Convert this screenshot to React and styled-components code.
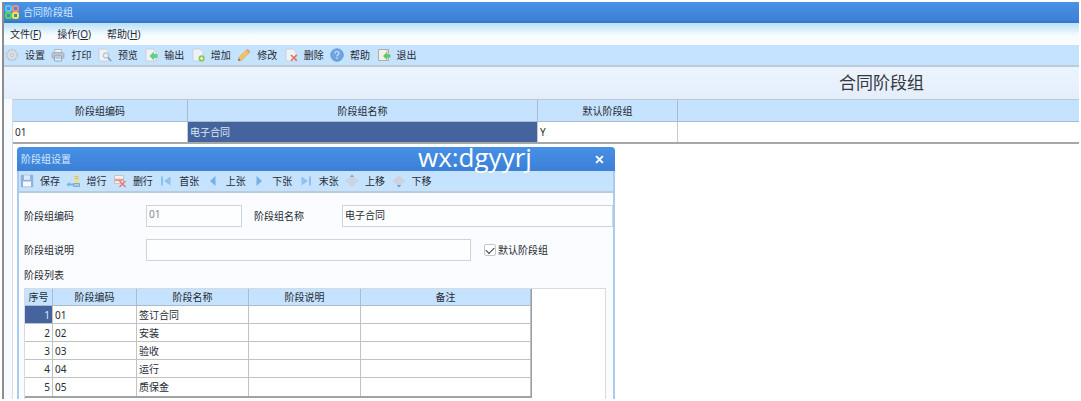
import React from 'react';
import styled, { createGlobalStyle, css } from 'styled-components';

const tools = [
    { icon: 'gear', label: '设置' },
    { icon: 'printer', label: '打印' },
    { icon: 'preview', label: '预览' },
    { icon: 'export', label: '输出' },
    { icon: 'add', label: '增加' },
    { icon: 'pencil', label: '修改' },
    { icon: 'remove', label: '删除' },
    { icon: 'help', label: '帮助' },
    { icon: 'exit', label: '退出' },
];

const dialogTools = [
    { icon: 'save', label: '保存' },
    { icon: 'addRow', label: '增行' },
    { icon: 'deleteRow', label: '删行' },
    { icon: 'first', label: '首张' },
    { icon: 'previous', label: '上张' },
    { icon: 'next', label: '下张' },
    { icon: 'last', label: '末张' },
    { icon: 'moveUp', label: '上移' },
    { icon: 'moveDown', label: '下移' },
];

const stages = [
    { code: '01', name: '签订合同' },
    { code: '02', name: '安装' },
    { code: '03', name: '验收' },
    { code: '04', name: '运行' },
    { code: '05', name: '质保金' },
];

const page = <path d="M2 1h7l3 3v9H2z" fill="#eef1f5" stroke="#c3c9d2" strokeWidth=".7" />;

const icons = {
    gear: (
        <>
            <circle cx="7" cy="7" r="5.4" fill="#dce3ec" stroke="#bcc4cf" strokeWidth="1.6" strokeDasharray="2.4 1" />
            <circle cx="7" cy="7" r="4.3" fill="#dde3ea" stroke="#c8ced7" strokeWidth=".8" />
            <circle cx="7" cy="7" r="1.8" fill="#c9e4fc" stroke="#b4bcc7" strokeWidth=".8" />
        </>
    ),
    printer: (
        <>
            <path d="M3.5 1.5h7V5h-7z" fill="#eef2f6" stroke="#a5afbb" strokeWidth=".8" />
            <rect x="1" y="4.5" width="12" height="6" rx="1.5" fill="#b9c2cd" stroke="#98a4b3" strokeWidth=".7" />
            <path d="M3.5 8h7v5h-7z" fill="#e4eefa" stroke="#8b9bb0" strokeWidth=".8" />
            <path d="M4.5 10h5" stroke="#7ea7d6" />
        </>
    ),
    preview: (
        <>
            <path d="M1 1h7l2.500 3v9H1z" fill="#eef1f5" stroke="#c3c9d2" strokeWidth=".7" />
            <circle cx="8" cy="7.5" r="2.7" fill="#e1effb" stroke="#aab4c2" />
            <path d="m10 9.6 3.2 3.3" stroke="#8b97a8" strokeWidth="1.5" />
        </>
    ),
    export: (
        <>
            {page}
            <path d="m5.500 8 4.500-4.500v2.500H13.500v4H10v2.500z" fill="#64cf80" />
        </>
    ),
    add: (
        <>
            {page}
            <circle cx="10.6" cy="10.4" r="3.1" fill="#8dc94c" />
            <path d="M10.6 8.8V12M9 10.4h3.2" stroke="#fff" />
        </>
    ),
    pencil: (
        <>
            <path d="m1.2 12.8.9-3.5L9.4 2l2.8 2.8-7.4 7.3z" fill="#f4c35a" stroke="#d1a04c" strokeWidth=".6" />
            <path d="m9.4 2 1.2-1.2 2.8 2.8-1.2 1.2z" fill="#df9b8b" />
            <path d="m1.2 12.8.6-2.3 1.7 1.7z" fill="#5f6570" />
        </>
    ),
    remove: (
        <>
            {page}
            <path d="m7 7 5.8 5.8m0-5.8L7 12.8" stroke="#e36a63" strokeWidth="1.6" />
        </>
    ),
    help: (
        <>
            <circle cx="7" cy="7" r="6.3" fill="#6fa5de" stroke="#5b92cf" strokeWidth=".7" />
            <path d="M5 5.5c0-2.6 4-2.6 4-.2 0 1.6-2 1.5-2 3.2" fill="none" stroke="#cfe5fb" strokeWidth="1.2" />
            <circle cx="7" cy="10.3" r=".8" fill="#cfe5fb" />
        </>
    ),
    exit: (
        <>
            <path d="M1.500 1.5h10v11h-10z" fill="#eff1ea" stroke="#aaa997" strokeWidth=".9" />
            <path d="M10 2v10" stroke="#cbbd94" />
            <path d="m6 8 4-4v2.4h3.500v3.2H10V12z" fill="#5fc774" />
        </>
    ),
    save: (
        <>
            <path d="M1.3 1.3h11.4v11.4H1.3z" fill="#8fb3dc" stroke="#84a8d3" strokeWidth=".8" />
            <path d="M4 1.3h6v4.5H4z" fill="#dcebfa" />
            <path d="M3 7.5h8v5H3z" fill="#f4f9ff" />
        </>
    ),
    addRow: (
        <>
            <path d="M8 1h5v8H8z" fill="#f3dc8d" />
            <path d="M8.500 2.5h4m-4 2h4" stroke="#9cb8cf" strokeWidth=".8" />
            <path d="M.5 10.5 3.3 8v1.6H7v2H3.3V13z" fill="#7ab1e5" />
            <path d="M7.500 9.500h6v3h-6z" fill="#a5cbe9" stroke="#6a9fd0" strokeWidth=".8" />
        </>
    ),
    deleteRow: (
        <>
            <path d="M1.500 1.500h9v8h-9z" fill="#f1f1f5" stroke="#c4b6bf" strokeWidth=".8" />
            <path d="M1.500 4.800h9v2.400h-9z" fill="#e99c96" />
            <path d="m6.500 7 6 6m0-6-6 6" stroke="#e47a73" strokeWidth="1.5" />
        </>
    ),
    first: (
        <>
            <path d="M3 2.500v9" stroke="#7db7e8" strokeWidth="1.600" />
            <path d="M11.500 2.500v9L5 7z" fill="#8fc1ec" />
        </>
    ),
    previous: <path d="M9.500 2v10L4 7z" fill="#73b1e6" />,
    next: <path d="M4.500 2v10L10 7z" fill="#73b1e6" />,
    last: (
        <>
            <path d="M11 2.500v9" stroke="#7db7e8" strokeWidth="1.600" />
            <path d="M2.500 2.500v9L9 7z" fill="#8fc1ec" />
        </>
    ),
    moveUp: (
        <>
            <path d="m7 1 6.500 6L7 13 .5 7z" fill="#ccd3de" />
            <path d="m7 .5 2.200 2.500H4.800z" fill="#83a5e8" />
        </>
    ),
    moveDown: (
        <>
            <path d="m7 1 6.500 6L7 13 .5 7z" fill="#ccd3de" />
            <path d="m7 13.500 2.200-2.500H4.800z" fill="#7397e4" />
        </>
    ),
};

function ToolBar({ items }) {
    return (
        <Tools>
            <ToolList>
                {items.map((item) => (
                    <ToolButton type="button" key={item.label}>
                        <ToolIcon viewBox="0 0 14 14" aria-hidden="true">
                            {icons[item.icon]}
                        </ToolIcon>
                        {item.label}
                    </ToolButton>
                ))}
            </ToolList>
        </Tools>
    );
}

function StageDialog() {
    return (
        <Dialog role="dialog" aria-label="阶段组设置">
            <DialogTitle>
                <span>阶段组设置</span>
                <CloseButton type="button" aria-label="关闭">
                    <CloseIcon viewBox="0 0 8 8">
                        <path d="m1 1 6 6m0-6L1 7" stroke="#fff" strokeWidth="1.8" />
                    </CloseIcon>
                </CloseButton>
                <Watermark>wx:dgyyrj</Watermark>
            </DialogTitle>
            <ToolBar items={dialogTools} />
            <DialogBody>
                <FormRow>
                    <FieldLabel htmlFor="code">阶段组编码</FieldLabel>
                    <CodeInput id="code" defaultValue="01" disabled />
                    <NameLabel htmlFor="name">阶段组名称</NameLabel>
                    <NameInput id="name" defaultValue="电子合同" />
                </FormRow>
                <FormRow>
                    <FieldLabel htmlFor="description">阶段组说明</FieldLabel>
                    <DescriptionInput id="description" />
                    <CheckLabel>
                        <CheckBox type="checkbox" defaultChecked />
                        默认阶段组
                    </CheckLabel>
                </FormRow>
                <ListCaption id="stages">阶段列表</ListCaption>
                <ListFrame>
                    <StageTable aria-labelledby="stages">
                        <colgroup>
                            <Col $width={28} />
                            <Col $width={84} />
                            <Col $width={112} />
                            <Col $width={112} />
                            <Col $width={170} />
                        </colgroup>
                        <thead>
                            <tr>
                                <StageHead>序号</StageHead>
                                <StageHead>阶段编码</StageHead>
                                <StageHead>阶段名称</StageHead>
                                <StageHead>阶段说明</StageHead>
                                <StageHead>备注</StageHead>
                            </tr>
                        </thead>
                        <tbody>
                            {stages.map((stage, index) => (
                                <tr key={stage.code}>
                                    <NumberCell $selected={index === 0}>{index + 1}</NumberCell>
                                    <StageCell>{stage.code}</StageCell>
                                    <StageCell>{stage.name}</StageCell>
                                    <StageCell />
                                    <StageCell />
                                </tr>
                            ))}
                        </tbody>
                    </StageTable>
                </ListFrame>
            </DialogBody>
        </Dialog>
    );
}

function App() {
    return (
        <Window>
            <GlobalStyle />
            <TitleBar>
                <Logo viewBox="0 0 14 14" aria-hidden="true">
                    <g fill="none" strokeWidth="2">
                        <rect x="1" y="1" width="5" height="5" rx="1" stroke="#62c4f2" />
                        <rect x="8" y="1" width="5" height="5" rx="1" stroke="#f08a80" />
                        <rect x="1" y="8" width="5" height="5" rx="1" stroke="#58d64e" />
                        <rect x="8" y="8" width="5" height="5" rx="1" stroke="#f3e443" />
                    </g>
                </Logo>
                合同阶段组
            </TitleBar>
            <MenuBar>
                <MenuButton type="button">文件(<u>F</u>)</MenuButton>
                <MenuButton type="button">操作(<u>O</u>)</MenuButton>
                <MenuButton type="button">帮助(<u>H</u>)</MenuButton>
            </MenuBar>
            <ToolBar items={tools} />
            <Heading>合同阶段组</Heading>
            <Content>
                <GroupTable>
                    <colgroup>
                        <Col $width={175} />
                        <Col $width={350} />
                        <Col $width={140} />
                        <col />
                    </colgroup>
                    <thead>
                        <tr>
                            <GroupHead>阶段组编码</GroupHead>
                            <GroupHead>阶段组名称</GroupHead>
                            <GroupHead>默认阶段组</GroupHead>
                            <GroupHead as="td" />
                        </tr>
                    </thead>
                    <tbody>
                        <tr>
                            <GroupCell>01</GroupCell>
                            <GroupCell $selected>电子合同</GroupCell>
                            <GroupCell>Y</GroupCell>
                            <GroupCell />
                        </tr>
                    </tbody>
                </GroupTable>
                <StageDialog />
            </Content>
        </Window>
    );
}

export default App

const GlobalStyle = createGlobalStyle`
    * {
        box-sizing: border-box;
    }

    body {
        margin: 0;
        background: #fff;
        color: #262b33;
        font-family: "Noto Sans", "Noto Sans CJK SC", sans-serif;
        font-size: 10px;
        line-height: 14px;
    }

    button, input {
        font: inherit;
        color: inherit;
    }
`

const Window = styled.div`
    display: flex;
    flex-direction: column;
    height: calc(100vh - 4px);
    margin: 2px;
    border-left: 2px solid #8b8d91;
    overflow: hidden;
`

const TitleBar = styled.header`
    display: flex;
    flex: none;
    align-items: center;
    gap: 4px;
    height: 21px;
    padding: 0 1px;
    background: linear-gradient(#4a93e6, #3b80d5);
    border-bottom: 2px solid #3377cf;
    color: #d5e9ff;
`

const Logo = styled.svg`
    width: 14px;
    height: 14px;
`

const MenuBar = styled.nav`
    display: flex;
    flex: none;
    align-items: center;
    gap: 16px;
    height: 22px;
    padding: 0 6px;
    background: linear-gradient(#b9e0f6, #f5fbff 55%, #fbfdff);
`

const MenuButton = styled.button`
    padding: 0;
    border: 0;
    background: none;
`

const Tools = styled.div`
    flex: none;
    height: 22px;
    padding-left: 1px;
    background: #c5e2ff;
    border-bottom: 2px solid #bccbdb;
`

const ToolList = styled.div`
    display: grid;
    grid-template-columns: repeat(9, 1fr);
    width: 418px;
    height: 100%;
`

const ToolButton = styled.button`
    display: flex;
    align-items: center;
    gap: 6px;
    padding: 0;
    border: 0;
    background: none;
    white-space: nowrap;
`

const ToolIcon = styled.svg`
    flex: none;
    width: 14px;
    height: 14px;
    fill: none;
`

const Heading = styled.h1`
    flex: none;
    height: 32px;
    margin: 0;
    padding-left: 680px;
    background: linear-gradient(#ecf4ff, #e4eefa);
    color: #333840;
    font-size: 17px;
    font-weight: 400;
    line-height: 32px;
    text-align: center;
`

const Content = styled.main`
    position: relative;
    flex: 1;
    min-height: 0;
    margin-left: 8px;
    border-left: 1px solid #d5dbe5;
    box-shadow: -8px 0 #f7faff;
`

const GroupTable = styled.table`
    width: 100%;
    table-layout: fixed;
    border-collapse: separate;
    border-spacing: 0;
    border-top: 1px solid #bcc8d5;
    border-bottom: 2px solid #a5a8aa;

    td:last-child {
        border-right: 0;
    }
`

const Col = styled.col`
    width: ${({ $width }) => $width}px;
`

const headCell = css`
    padding: 0;
    background: #c5e2ff;
    border-right: 1px solid #a9bccf;
    border-bottom: 1px solid #a9bccf;
    font-weight: 400;
    text-align: center;
`

const GroupHead = styled.th`
    ${headCell}
    height: 22px;
`

const GroupCell = styled.td`
    height: 20px;
    padding: 0 2px;
    border-right: 1px solid #c6c9ce;
    background: ${({ $selected }) => ($selected ? '#45649d' : '#fff')};
    color: ${({ $selected }) => ($selected ? '#dce8fa' : 'inherit')};
`

const Dialog = styled.section`
    position: absolute;
    top: 48px;
    left: 4px;
    bottom: 0;
    display: flex;
    flex-direction: column;
    width: 598px;
    border: 2px solid #a9cbf2;
    border-top: 0;
    border-bottom: 0;
    border-radius: 4px 4px 0 0;
    background: #fafcff;
`

const DialogTitle = styled.div`
    position: relative;
    display: flex;
    flex: none;
    align-items: center;
    justify-content: space-between;
    height: 24px;
    margin: 0 -2px;
    padding: 0 11px 0 4px;
    border-radius: 4px 4px 0 0;
    background: linear-gradient(#4690e6, #3b80d6);
    color: #d5e9ff;
`

const CloseButton = styled.button`
    display: flex;
    padding: 0;
    border: 0;
    background: none;
`

const CloseIcon = styled.svg`
    width: 9px;
    height: 9px;
`

const Watermark = styled.span`
    position: absolute;
    top: -6px;
    left: 401px;
    color: #fff;
    font-family: "Open Sans", sans-serif;
    font-size: 26px;
    line-height: 32px;
`

const DialogBody = styled.div`
    display: flex;
    flex: 1;
    flex-direction: column;
    min-height: 0;
    padding: 12px 0 0 5px;
`

const FormRow = styled.div`
    display: flex;
    flex: none;
    align-items: center;
    height: 22px;
    margin-bottom: 12px;
`

const FieldLabel = styled.label`
    width: 122px;
`

const NameLabel = styled.label`
    width: 88px;
    margin-left: 12px;
`

const TextInput = styled.input`
    height: 22px;
    padding: 0 2px 4px;
    border: 1px solid #cfd3de;
    border-radius: 0;
    background: #fdfeff;
    outline: 0;
`

const CodeInput = styled(TextInput)`
    width: 96px;
    color: #85898f;
`

const NameInput = styled(TextInput)`
    flex: 1;
    min-width: 0;
`

const DescriptionInput = styled(TextInput)`
    width: 325px;
`

const CheckLabel = styled.label`
    display: flex;
    align-items: center;
    gap: 2px;
    margin-left: 13px;
`

const CheckBox = styled.input`
    appearance: none;
    width: 12px;
    height: 12px;
    margin: 0;
    border: 1px solid #c4c7cd;
    border-radius: 2px;
    background: #fff;

    &:checked:before {
        display: block;
        width: 7px;
        height: 4px;
        margin: 2px 0 0 1px;
        border-bottom: 1px solid #333;
        border-left: 1px solid #333;
        content: "";
        transform: rotate(-45deg);
    }
`

const ListCaption = styled.div`
    flex: none;
    height: 14px;
    margin: -5px 0 6px;
`

const ListFrame = styled.div`
    flex: 1;
    min-height: 0;
    margin-right: 7px;
    border: 1px solid #d5dae3;
    border-bottom: 0;
    background: #fff;
    overflow: hidden;
`

const StageTable = styled.table`
    width: 507px;
    table-layout: fixed;
    border-collapse: separate;
    border-spacing: 0;
    border-right: 1px solid #9a9da1;
    border-bottom: 2px solid #a0a3a6;

    tr:last-child td {
        border-bottom: 0;
    }
`

const StageHead = styled.th`
    ${headCell}
    height: 17px;
`

const StageCell = styled.td`
    height: 18px;
    padding: 0 2px;
    border-right: 1px solid #c0c2c6;
    border-bottom: 1px solid #c0c2c6;
    background: #fff;
`

const NumberCell = styled(StageCell)`
    background: ${({ $selected }) => ($selected ? '#45649d' : '#fff')};
    color: ${({ $selected }) => ($selected ? '#dce8fa' : 'inherit')};
    text-align: right;
`
